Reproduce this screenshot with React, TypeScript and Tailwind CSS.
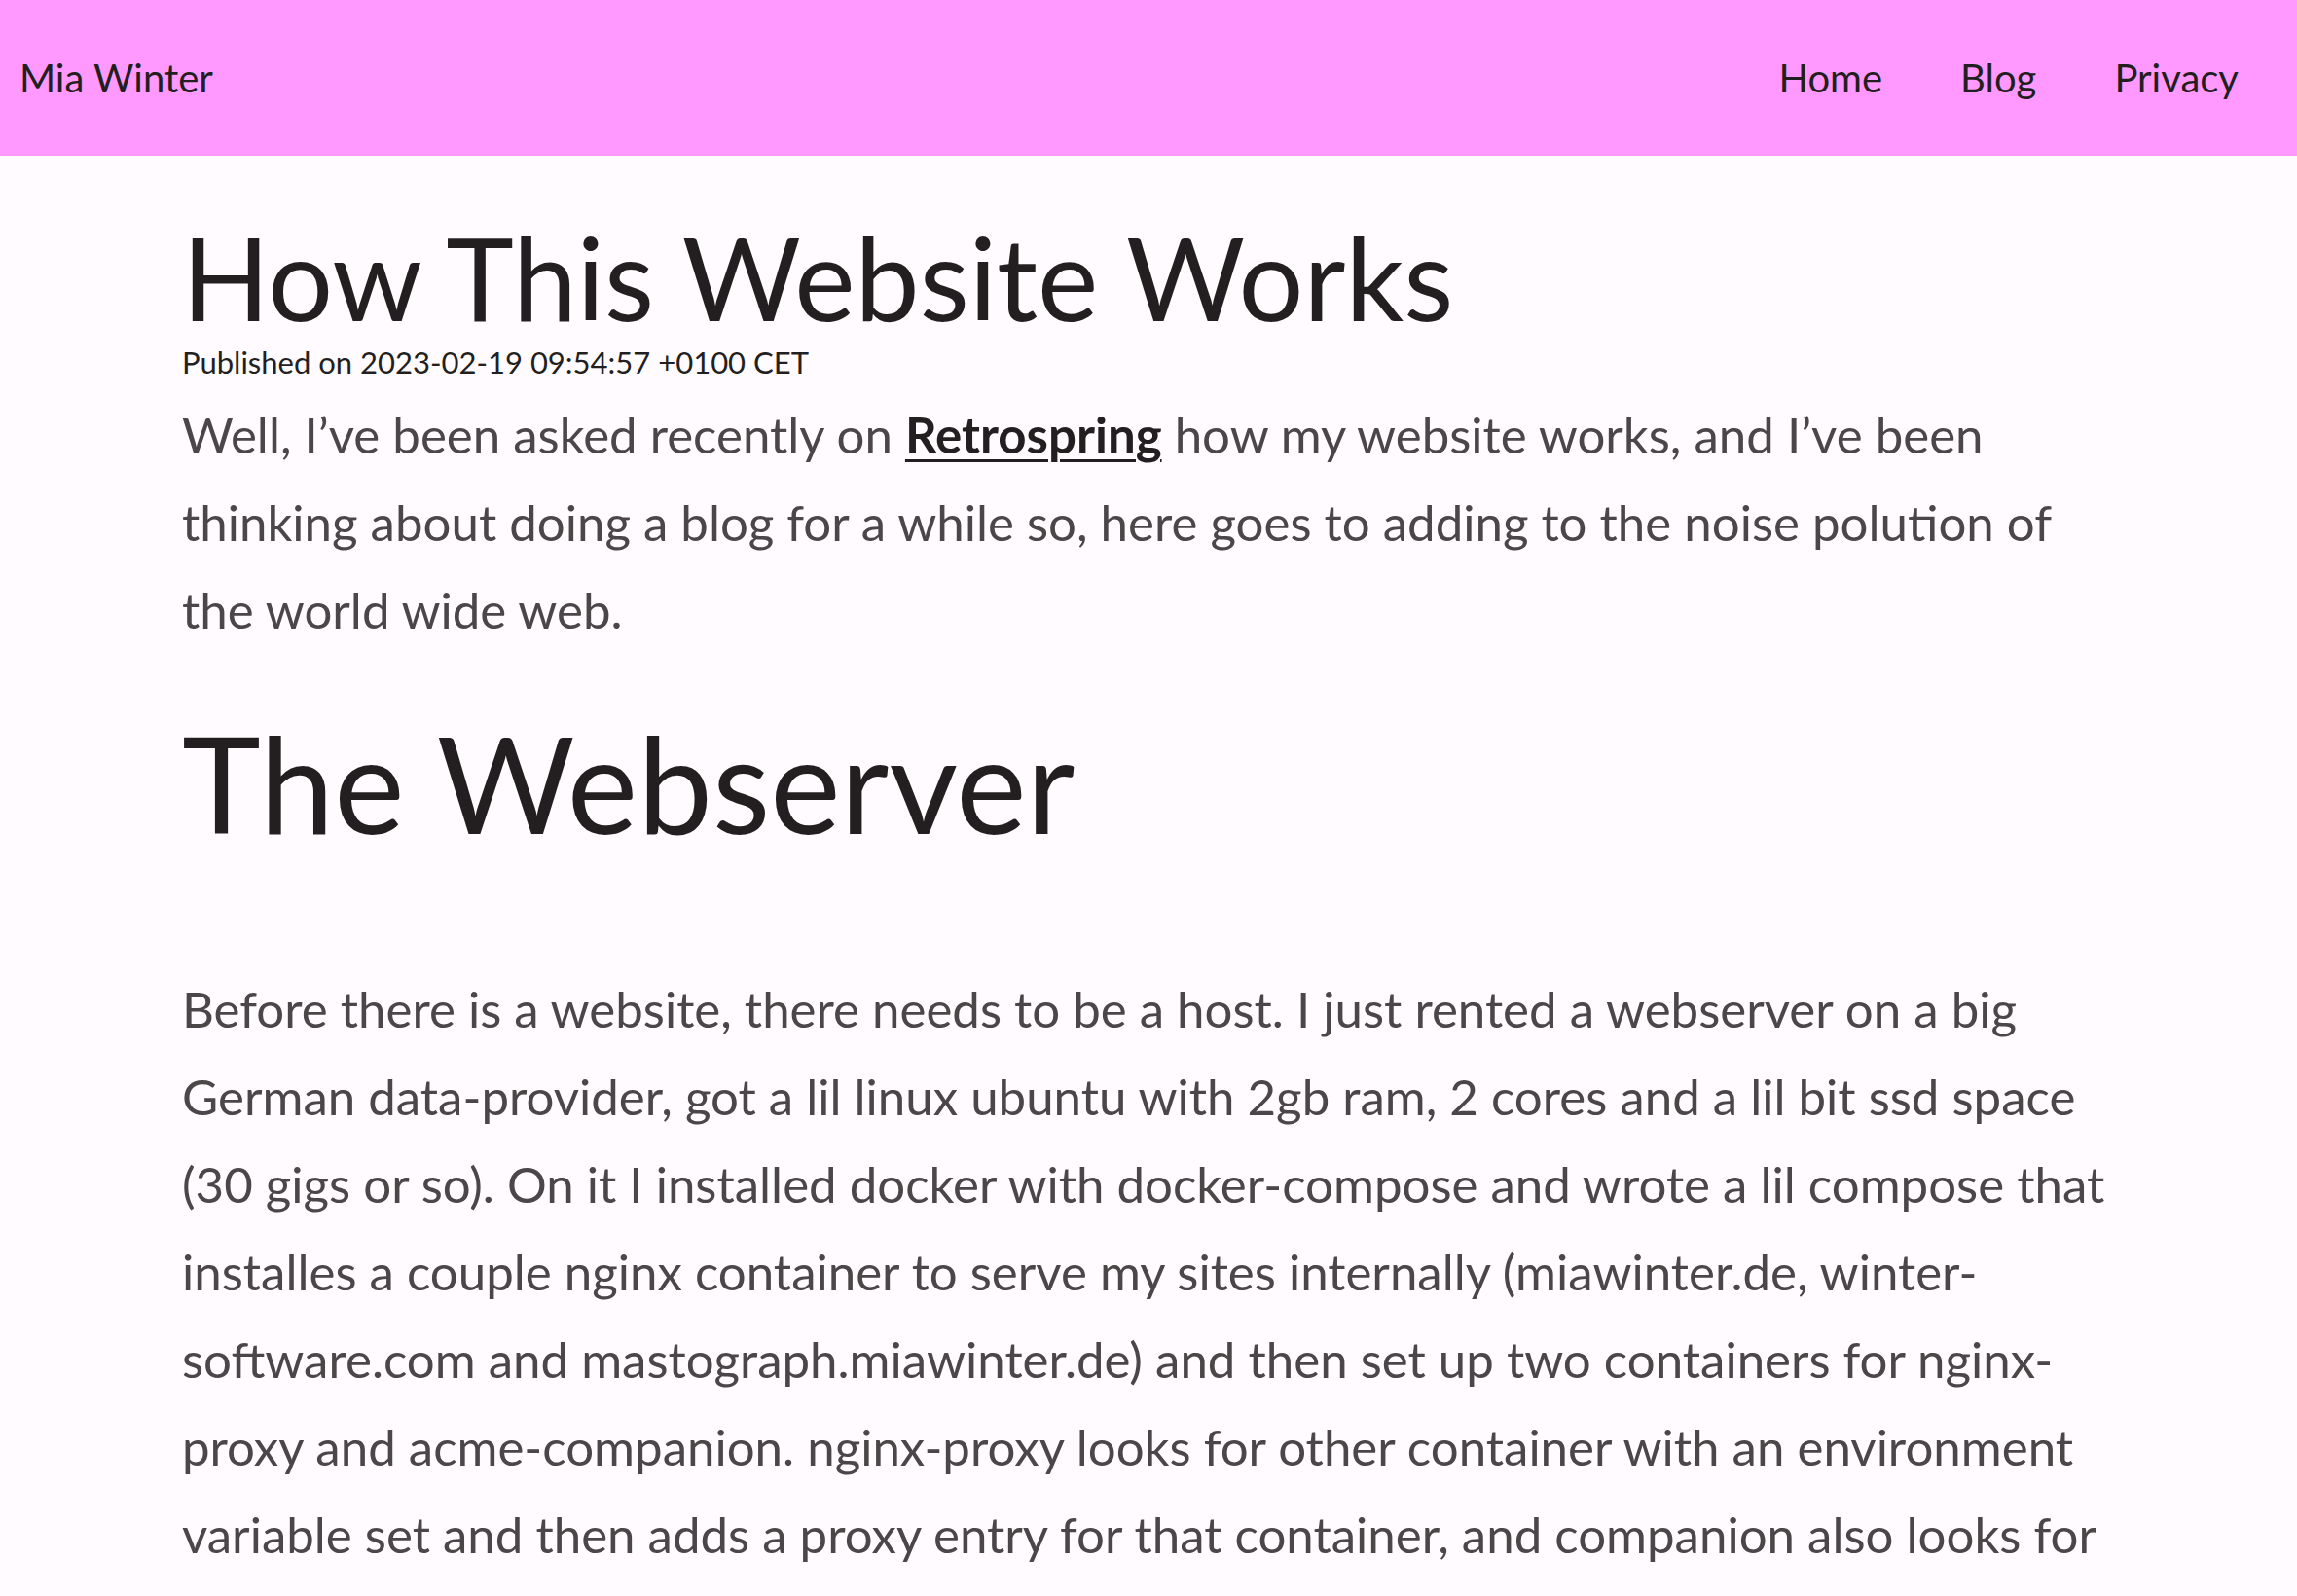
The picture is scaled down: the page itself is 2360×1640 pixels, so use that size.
import React from 'react'

const font = { fontFamily: 'Lato, "Open Sans", sans-serif' }

function NavBar() {
  return (
    <header className="flex h-[160px] items-center justify-between bg-[#ff99ff] px-5 text-[40px] leading-none text-[#231f20]">
      <a href="#">Mia Winter</a>
      <nav className="flex">
        <a href="#" className="px-10">Home</a>
        <a href="#" className="px-10">Blog</a>
        <a href="#" className="px-10">Privacy</a>
      </nav>
    </header>
  )
}

export default function App() {
  return (
    <div className="min-h-screen bg-[#fffbfe]" style={font}>
      <NavBar />
      <main className="mx-auto w-[1986px]">
        <h1 className="mt-[66px] text-[118px] font-normal leading-none text-[#231f20]">How This Website Works</h1>
        <p className="text-[31px] leading-[56px] text-[#231f20]">Published on 2023-02-19 09:54:57 +0100 CET</p>
        <p className="mt-[2px] text-[51px] leading-[90px] text-[#4b4749]">
          Well, I’ve been asked recently on{' '}
          <a href="#" className="font-bold text-[#231f20] underline decoration-[3px] underline-offset-[6px]">Retrospring</a>{' '}
          how my website works, and I’ve been thinking about doing a blog for a while so, here goes to adding to the noise polution of the world wide web.
        </p>
        <h2 className="mt-[64px] text-[137px] font-normal leading-none text-[#231f20]">The Webserver</h2>
        <p className="mt-[119px] text-[51px] leading-[90px] text-[#4b4749]">
          Before there is a website, there needs to be a host. I just rented a webserver on a big German data-provider, got a lil linux ubuntu with 2gb ram, 2 cores and a lil bit ssd space (30 gigs or so). On it I installed docker with docker-compose and wrote a lil compose that installes a couple nginx container to serve my sites internally (miawinter.de, winter-software.com and mastograph.miawinter.de) and then set up two containers for nginx-proxy and acme-companion. nginx-proxy looks for other container with an environment variable set and then adds a proxy entry for that container, and companion also looks for that variable and requests a certificate for it.
        </p>
      </main>
    </div>
  )
}
